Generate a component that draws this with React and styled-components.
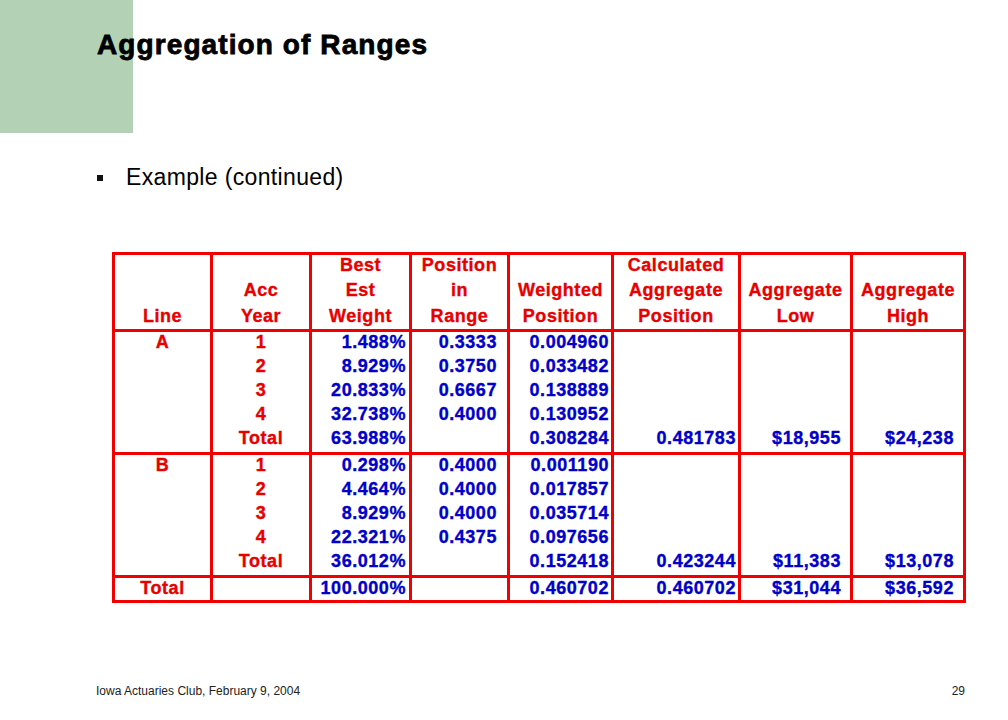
import styled, { createGlobalStyle } from "styled-components";

const GlobalStyle = createGlobalStyle`
  html, body {
    margin: 0;
    padding: 0;
    background: #ffffff;
  }
  body {
    font-family: "Liberation Sans", Arial, sans-serif;
  }
`;

const Slide = styled.div`
  position: relative;
  width: 1008px;
  height: 720px;
  display: flex;
  flex-direction: column;
  background: #ffffff;
  overflow: hidden;
`;

// decorative block that sits under the title
const CornerBlock = styled.div`
  position: absolute;
  left: 0;
  top: 0;
  width: 133px;
  height: 133px;
  background: #b3d2b5;
`;

const Title = styled.h1`
  position: relative;
  margin: 31px 0 0 97px;
  font-size: 28px;
  line-height: 28px;
  font-weight: bold;
  letter-spacing: 1.1px;
  color: #000;
  -webkit-text-stroke: 0.8px #000;
`;

const BulletRow = styled.div`
  display: flex;
  align-items: center;
  gap: 23px;
  margin: 107px 0 0 97px;
  font-size: 23px;
  line-height: 23px;
  letter-spacing: 0.35px;
  color: #000;
`;

const Bullet = styled.span`
  width: 6px;
  height: 6px;
  background: #111;
`;

const TableWrap = styled.div`
  margin: 63px 0 0 112px;
`;

const Grid = styled.table`
  border-collapse: collapse;
  table-layout: fixed;
  width: 854px;
  border: 3px solid #f00000;
  font-size: 18px;
  font-weight: bold;
  letter-spacing: 0.55px;
  -webkit-text-stroke: 0.35px currentColor;
`;

const Group = styled.tbody`
  border-top: 3px solid #f00000;
`;

const Cell = styled.td`
  border-left: 3px solid #f00000;
  border-right: 3px solid #f00000;
  padding: 0 ${(p) => p.$pad || 0}px 0 0;
  height: ${(p) => p.$h || 24}px;
  line-height: 20px;
  text-align: ${(p) => p.$align || "center"};
  vertical-align: top;
  color: ${(p) => (p.$blue ? "#0000c8" : "#e60000")};
  white-space: nowrap;
`;

const Head = styled.th`
  border: 3px solid #f00000;
  padding: 0;
  height: 74px;
  vertical-align: bottom;
  text-align: center;
  color: #e60000;
  font-weight: bold;
`;

const HeadStack = styled.div`
  margin-top: -3px;
  line-height: 25.5px;
`;

const Footer = styled.div`
  margin-top: auto;
  display: flex;
  justify-content: space-between;
  padding: 0 43px 23px 96px;
  font-size: 12px;
  line-height: 12px;
  color: #222;
`;

const widths = [98, 99, 100, 98, 104, 127, 112, 113];
// right padding of the numeric columns (Best, Position, Weighted, Calc, Low, High)
const pads = [3, 10, 2, 2, 9, 9];

const headers = [
  ["Line"],
  ["Acc", "Year"],
  ["Best", "Est", "Weight"],
  ["Position", "in", "Range"],
  ["Weighted", "Position"],
  ["Calculated", "Aggregate", "Position"],
  ["Aggregate", "Low"],
  ["Aggregate", "High"],
];

const groups = [
  {
    line: "A",
    rows: [
      ["1", "1.488%", "0.3333", "0.004960"],
      ["2", "8.929%", "0.3750", "0.033482"],
      ["3", "20.833%", "0.6667", "0.138889"],
      ["4", "32.738%", "0.4000", "0.130952"],
    ],
    total: ["63.988%", "", "0.308284", "0.481783", "$18,955", "$24,238"],
  },
  {
    line: "B",
    rows: [
      ["1", "0.298%", "0.4000", "0.001190"],
      ["2", "4.464%", "0.4000", "0.017857"],
      ["3", "8.929%", "0.4000", "0.035714"],
      ["4", "22.321%", "0.4375", "0.097656"],
    ],
    total: ["36.012%", "", "0.152418", "0.423244", "$11,383", "$13,078"],
  },
];

const grandTotal = ["100.000%", "", "0.460702", "0.460702", "$31,044", "$36,592"];

const Num = ({ i, value, h }) => (
  <Cell $blue $align="right" $pad={pads[i]} $h={h}>
    {value}
  </Cell>
);

export default function App() {
  return (
    <>
      <GlobalStyle />
      <Slide>
        <CornerBlock />
        <Title>Aggregation of Ranges</Title>
        <BulletRow>
          <Bullet />
          <span>Example (continued)</span>
        </BulletRow>
        <TableWrap>
          <Grid>
            <colgroup>
              {widths.map((w, i) => (
                <col key={i} style={{ width: w }} />
              ))}
            </colgroup>
            <thead>
              <tr>
                {headers.map((lines, i) => (
                  <Head key={i}>
                    <HeadStack>
                      {lines.map((l) => (
                        <div key={l}>{l}</div>
                      ))}
                    </HeadStack>
                  </Head>
                ))}
              </tr>
            </thead>
            {groups.map((g) => (
              <Group key={g.line}>
                {g.rows.map((r, ri) => (
                  <tr key={ri}>
                    <Cell>{ri === 0 ? g.line : ""}</Cell>
                    <Cell>{r[0]}</Cell>
                    <Num i={0} value={r[1]} />
                    <Num i={1} value={r[2]} />
                    <Num i={2} value={r[3]} />
                    <Num i={3} value="" />
                    <Num i={4} value="" />
                    <Num i={5} value="" />
                  </tr>
                ))}
                <tr>
                  <Cell />
                  <Cell>Total</Cell>
                  {g.total.map((v, i) => (
                    <Num key={i} i={i} value={v} />
                  ))}
                </tr>
              </Group>
            ))}
            <Group>
              <tr>
                <Cell $h={22}>Total</Cell>
                <Cell $h={22} />
                {grandTotal.map((v, i) => (
                  <Num key={i} i={i} value={v} h={22} />
                ))}
              </tr>
            </Group>
          </Grid>
        </TableWrap>
        <Footer>
          <span>Iowa Actuaries Club, February 9, 2004</span>
          <span>29</span>
        </Footer>
      </Slide>
    </>
  );
}
